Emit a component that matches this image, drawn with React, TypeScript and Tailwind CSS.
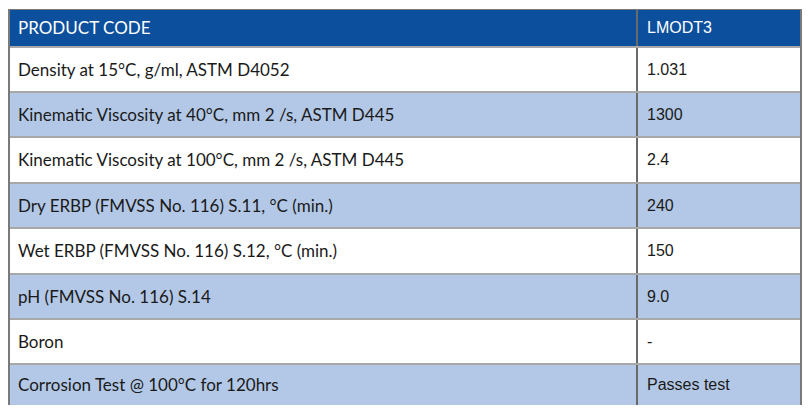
import React from "react";

const rows: [string, string][] = [
  ["Density at 15°C, g/ml, ASTM D4052", "1.031"],
  ["Kinematic Viscosity at 40°C, mm 2 /s, ASTM D445", "1300"],
  ["Kinematic Viscosity at 100°C, mm 2 /s, ASTM D445", "2.4"],
  ["Dry ERBP (FMVSS No. 116) S.11, °C (min.)", "240"],
  ["Wet ERBP (FMVSS No. 116) S.12, °C (min.)", "150"],
  ["pH (FMVSS No. 116) S.14", "9.0"],
  ["Boron", "-"],
  ["Corrosion Test @ 100°C for 120hrs", "Passes test"],
];

const heights = ["h-[45px]", "h-[45px]", "h-[46px]", "h-[45px]", "h-[46px]", "h-[45px]", "h-[45px]", "h-[42px]"];

export default function App() {
  return (
    <div className="w-[810px] h-[417px] bg-white overflow-hidden pt-[9px] pl-[8px]">
      <div className="w-[794px] border-l-2 border-r-2 border-t border-[#7a7a7a]">
        <div className="flex h-[36px] bg-[#0c4f9c] text-white text-[17px] font-['Lato',sans-serif]">
          <div className="w-[628px] border-r-2 border-[#6a6a6a] pl-[8px] flex items-center">PRODUCT CODE</div>
          <div className="flex-1 pl-[9px] flex items-center font-['Liberation_Sans',sans-serif] text-[16px]">LMODT3</div>
        </div>
        {rows.map(([k, v], i) => (
          <div
            key={i}
            className={`flex ${heights[i]} border-t-2 border-[#a8a8a8] text-[#1a1a1a] ${i % 2 === 1 ? "bg-[#b3c8e6]" : "bg-white"}`}
          >
            <div className="w-[628px] border-r-2 border-[#6a6a6a] pl-[8px] flex items-center text-[17px] font-['Lato',sans-serif]">
              {k}
            </div>
            <div className="flex-1 pl-[9px] flex items-center text-[16px] font-['Liberation_Sans',sans-serif]">
              {v}
            </div>
          </div>
        ))}
      </div>
    </div>
  );
}
